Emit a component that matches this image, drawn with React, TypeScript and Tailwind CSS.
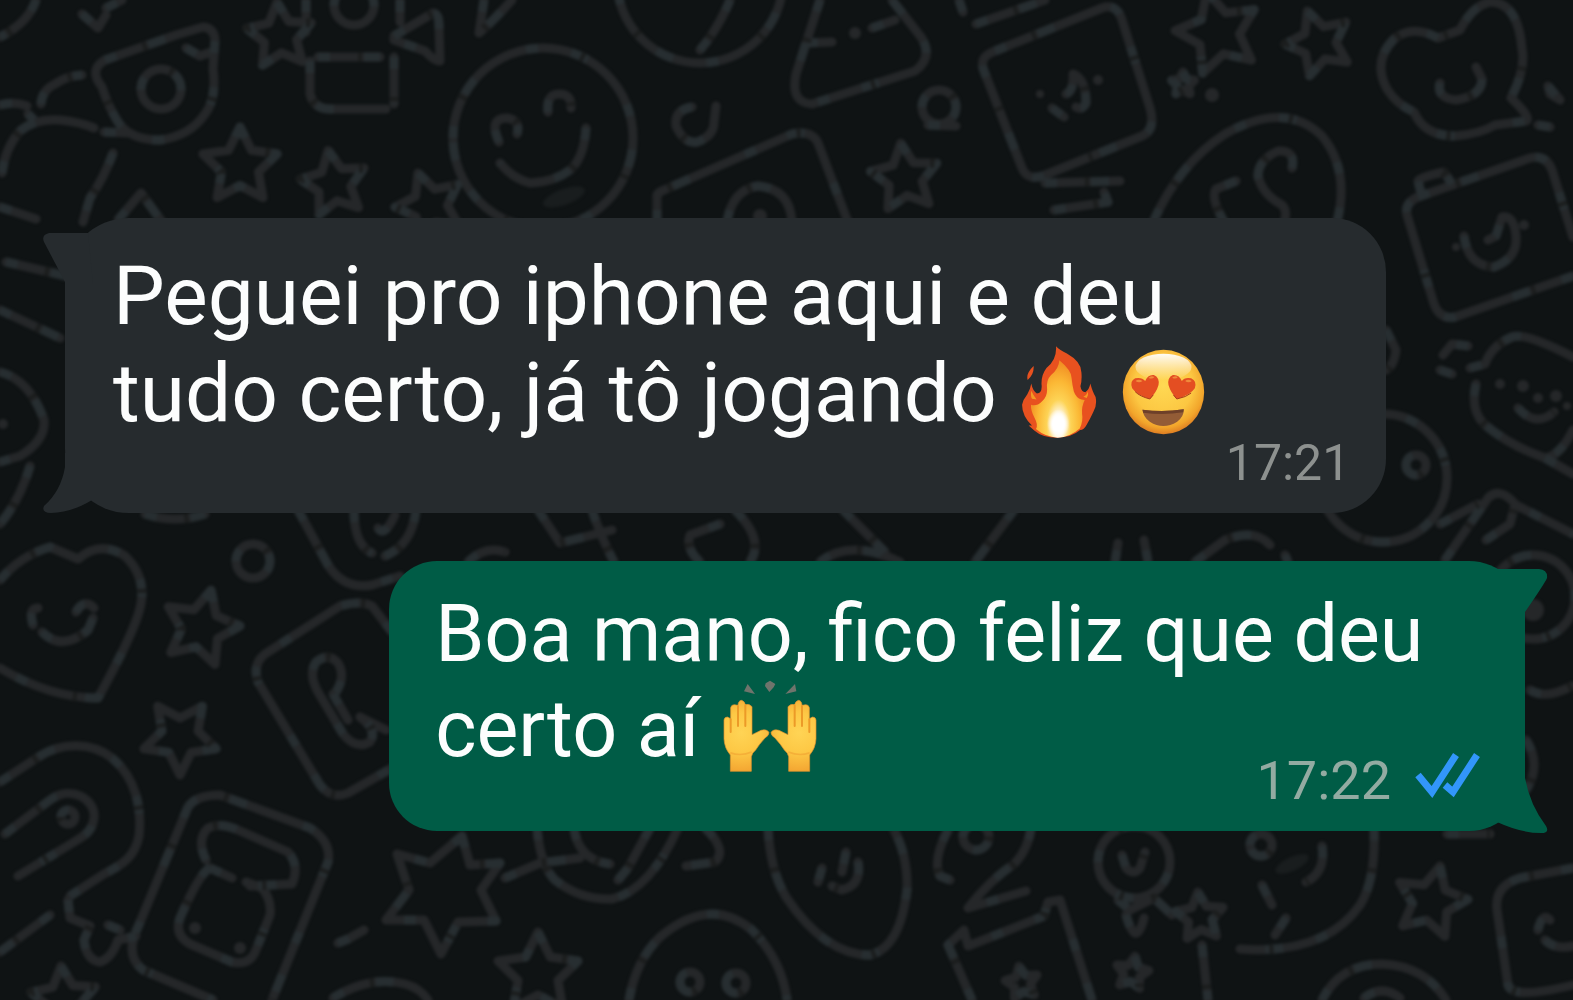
import type { ReactNode } from 'react';
import { clsx } from 'clsx';


// [cx, cy, radius, rotation]
const STARS = [
    [280, 36, 34, -5],
    [240, 166, 39, 0],
    [334, 184, 34, -10],
    [430, 206, 35, -20],
    [905, 178, 35, -7],
    [1218, 33, 43, -15],
    [1319, 43, 34, -20],
    [1183, 84, 12, 0],
    [201, 628, 39, 15],
    [180, 737, 38, 36],
    [64, 1000, 34, -5],
    [538, 974, 42, 0],
    [1200, 917, 25, -5],
    [1431, 902, 37, 14],
    [1022, 983, 17, -10],
    [1132, 973, 17, 10],
];

// [cx, cy, radius]
const RINGS = [
    [161, 89, 20],
    [354, 5, 20],
    [543, 138, 90],
    [700, -20, 83],
    [939, 107, 17],
    [253, 561, 17],
    [68, 817, 7],
    [1383, 478, 64],
    [1416, 465, 10],
    [1533, 597, 42],
    [690, 982, 10],
    [736, 983, 10],
    [976, 837, 13],
    [1134, 862, 36],
    [1261, 845, 11],
];

// [cx, cy, radius]
const DOTS = [
    [1098, 80, 5], [1040, 94, 4], [1212, 95, 7], [1456, 247, 4], [1524, 225, 5],
    [1500, 384, 5], [1523, 386, 6], [1538, 398, 5], [1556, 396, 6], [1567, 406, 4],
    [760, 216, 7], [3, 424, 5], [855, 33, 6], [1533, 610, 11], [195, 928, 6], [240, 948, 6],
];

const DOODLES = [
    // upper left
    'M36 0C30 18 14 30 0 37M82 14L98 28L106 15M106 8L122 0',
    'M105 60L176 35L203 27Q214 28 215 40L213 69Q217 98 205 114Q190 136 160 140Q130 140 118 122Q108 106 102 87Q88 70 105 60ZM186 48L200 56L211 52',
    'M41 104Q42 90 55 84Q66 76 82 75M0 105Q14 101 27 106M28 114L34 120',
    'M2 173Q5 148 20 131Q36 118 60 120Q80 122 94 128M104 132L128 133M113 153Q104 178 90 198L83 222M0 207L36 219M118 220L141 193L162 222',
    'M306 0V32M400 0V22M318 57H380M394 57V104M310 61V94Q314 109 330 109H386',
    'M394 36L433 13Q439 14 439 25L440 61Q434 61 425 51L394 40ZM484 0L479 33Q492 22 512 0',
    // laughing face
    'M499 142Q488 118 507 118Q521 120 517 134M548 112Q546 94 559 94Q572 94 571 108M586 128Q584 158 570 170Q554 182 530 183Q512 178 500 163',
    // top middle
    'M730 0Q722 20 708 40L700 50M692 107Q674 110 676 126Q684 144 697 142Q714 136 714 122L716 106',
    'M820 0L796 74Q790 103 812 104L915 71Q934 57 921 37L892 0M806 43L832 42M872 28L895 20M928 125L956 126M959 0L963 12M976 24L1045 0',
    'M657 222V197Q656 193 664 190L792 134Q812 130 818 143L848 222M727 222Q732 190 758 186Q790 189 792 222',
    'M995 51L1102 8Q1117 3 1122 20L1150 108Q1156 130 1142 136L1045 175Q1028 182 1022 168L984 71Q978 57 995 51Z',
    'M1066 94Q1074 91 1073 74Q1086 79 1086 103Q1082 111 1076 107M1052 108L1064 117M1045 183L1120 181M1054 210L1108 202L1104 192',
    // upper right
    'M1154 220Q1180 163 1225 134Q1285 100 1322 136Q1350 170 1337 222M1292 168Q1296 150 1278 151Q1258 160 1258 176Q1262 194 1282 205Q1288 211 1284 222M1236 181L1216 189Q1210 197 1224 222',
    'M1438 38Q1412 24 1394 39Q1372 61 1387 89Q1396 104 1414 112Q1424 136 1455 136Q1480 134 1495 125L1526 121Q1532 118 1511 98Q1526 69 1522 49Q1518 2 1490 2Q1472 6 1460 30ZM1440 83Q1436 98 1456 100Q1482 96 1482 79L1476 67',
    'M1548 86L1560 100L1550 94ZM1538 125L1550 127',
    'M1418 197L1530 158Q1546 154 1552 170L1573 237M1573 276L1455 317Q1440 320 1434 304L1407 215Q1404 203 1418 197M1421 193L1418 181Q1420 177 1444 172L1452 184',
    'M1464 236Q1468 266 1494 267Q1518 258 1516 236Q1514 215 1502 217L1496 236L1488 240',
    'M1386 330L1396 350Q1394 366 1386 370M1468 346L1452 344L1443 355M1440 370L1452 374',
    'M1470 368L1485 364Q1492 345 1512 337Q1524 332 1573 357M1476 384Q1470 410 1484 424Q1510 446 1545 458Q1560 456 1573 430M1545 458L1573 474M1518 408Q1536 428 1554 412',
    'M1445 560L1488 498Q1500 486 1516 505L1573 534M1440 524L1478 504M1486 540L1510 524L1514 508M1530 690Q1545 700 1572 686M1526 740Q1542 765 1526 790',
    // left edge
    'M6 262L66 276M0 310L60 338M0 372Q30 380 44 420Q46 440 20 456L0 462M30 466Q20 500 0 524M145 514Q175 524 205 514',
    'M0 580Q20 556 50 547L78 559Q100 540 125 556Q150 580 138 615Q130 640 98 698Q50 698 0 668M33 625Q28 608 38 608M42 632Q62 652 88 630L93 618M76 612Q84 598 94 608',
    'M298 510L328 565Q344 590 372 585L400 576M392 632L372 606Q360 600 340 606L265 654Q252 664 258 682L320 785Q332 800 348 793L392 768',
    'M336 692Q346 676 338 663Q328 652 316 662Q308 674 318 692L343 734Q356 750 370 742Q378 730 360 717L386 730M333 694L348 720',
    'M0 782L40 756C62 742 92 742 112 758C136 778 142 808 139 836C135 856 124 864 104 874L70 896M50 915L0 952M5 834L50 800C72 784 96 800 94 818C92 832 84 836 74 842L18 876',
    'M68 900L70 918L90 926L84 940Q86 960 100 962Q112 958 118 940L136 936M108 925L120 930',
    'M188 807Q196 795 220 795L310 828Q332 842 328 862L272 1000M188 807L138 927Q124 955 143 970L213 1000',
    'M206 860Q196 840 208 828Q220 822 238 830L288 852Q300 865 292 884L250 886M210 868Q200 872 180 918Q174 935 190 944L232 962Q250 966 256 950L270 915Q272 900 262 888L246 882M210 868L232 878',
    'M338 943L348 939L364 930M333 998Q370 975 405 984Q420 988 428 1000',
    // strip between the bubbles
    'M354 510Q354 545 372 553M416 510Q412 545 385 556M378 528Q384 538 395 515M538 510L560 543L612 530M592 510Q600 535 614 562M468 562Q485 545 505 552',
    'M735 510Q765 540 750 562M720 524L690 535Q685 548 700 562M843 510L885 552M820 562Q850 538 900 562M1014 510L975 562M1115 562L1118 543M1148 562L1144 540M1195 562L1225 540Q1255 528 1270 545M1285 555L1288 562',
    // bottom
    'M462 836L470 865L500 863L481 890L496 921L458 922L441 954L424 920L386 920L409 890L397 854L430 863Z',
    'M537 828Q540 865 555 880Q580 900 612 899Q650 890 678 828M574 828Q578 860 610 864M650 828L628 868L618 880M505 878L540 863L580 858M705 828Q728 850 715 862L686 866',
    'M768 828Q770 870 786 897Q825 955 870 955Q900 948 907 890Q908 855 893 828M822 868L818 882M846 852L842 872M858 862Q862 885 842 890L832 886',
    'M629 1000Q636 960 660 937Q710 895 752 930Q782 960 787 1000M948 830Q932 860 940 876L950 880',
    'M1031 828Q1028 850 1014 864Q990 880 968 908L1026 891M972 1000L948 945L964 930L968 946L1044 916L1048 902L1060 900L1092 1000',
    'M1122 855L1126 868Q1134 876 1140 868L1145 852M1118 900L1130 910L1154 898L1172 915M1126 915Q1136 950 1144 918M1202 945L1208 1000',
    'M1374 828Q1376 880 1360 905Q1325 955 1240 949M1322 846Q1326 872 1306 882M1262 885L1272 905M1286 918L1275 935',
    'M1322 1000Q1340 964 1382 964Q1425 966 1446 1000M1364 998Q1382 984 1400 998M1447 834H1490M1573 868L1520 878Q1494 886 1497 910L1508 985Q1512 1000 1573 985M1538 930Q1542 912 1550 920M1545 940Q1555 950 1573 946',
];

function starPath(cx: number, cy: number, r: number, rotation: number) {
    const points = Array.from({ length: 10 }, (_, i) => {
        const angle = ((i * 36 + rotation - 90) * Math.PI) / 180;
        const length = i % 2 ? r * 0.5 : r;
        return `${(cx + Math.cos(angle) * length).toFixed(1)} ${(cy + Math.sin(angle) * length).toFixed(1)}`;
    });
    return `M${points.join('L')}Z`;
}

const WALLPAPER = [
    ...DOODLES,
    ...STARS.map(([cx, cy, r, rotation]) => starPath(cx, cy, r, rotation)),
    ...RINGS.map(([cx, cy, r]) => `M${cx - r} ${cy}a${r} ${r} 0 1 1 ${r * 2} 0a${r} ${r} 0 1 1 ${-r * 2} 0`),
].join('');

function Wallpaper() {
    return (
        <svg
            className="absolute inset-0 -z-10 h-full w-full"
            viewBox="0 0 1573 1000"
            preserveAspectRatio="xMidYMid slice"
            fill="none"
            strokeLinejoin="round"
            strokeLinecap="round"
            aria-hidden="true"
        >
            <filter id="soft" x="0" y="0" width="100%" height="100%" colorInterpolationFilters="sRGB">
                <feGaussianBlur stdDeviation="1.5" />
            </filter>
            <g filter="url(#soft)">
                <path d={WALLPAPER} stroke="#252729" strokeWidth="9" />
                <path d={WALLPAPER} stroke="#272e31" strokeWidth="9" strokeLinecap="butt" strokeDasharray="12 34 18 60" />
                <path d={WALLPAPER} stroke="#1b1d1d" strokeWidth="9" strokeLinecap="butt" strokeDasharray="0 40 4 96" />
                {DOTS.map(([cx, cy, r]) => (
                    <circle key={`${cx}-${cy}`} cx={cx} cy={cy} r={r} fill="#252729" />
                ))}
                <ellipse cx="564" cy="197" rx="22" ry="8" fill="#191d1e" transform="rotate(-20 564 197)" />
                <ellipse cx="1292" cy="864" rx="18" ry="7" fill="#191d1e" transform="rotate(-25 1292 864)" />
            </g>
        </svg>
    )
}

function FireEmoji() {
    return (
        <svg className="inline-block -mt-3 ml-1 h-[92px] w-[76px] align-[-17px]" viewBox="124 50 228 279" role="img" aria-label="🔥">
            <defs>
                <radialGradient id="flame" gradientUnits="userSpaceOnUse" cx="237" cy="290" r="150" gradientTransform="translate(237 290) scale(.62 1.3) translate(-237 -290)">
                    <stop offset="0" stopColor="#fff" />
                    <stop offset=".18" stopColor="#fff8e4" />
                    <stop offset=".4" stopColor="#fdd355" />
                    <stop offset=".68" stopColor="#fbb835" />
                    <stop offset="1" stopColor="#f08b22" />
                </radialGradient>
                <radialGradient id="core">
                    <stop offset=".5" stopColor="#fff" />
                    <stop offset="1" stopColor="#fff" stopOpacity="0" />
                </radialGradient>
            </defs>
            <path
                fill="#e8511f"
                d="M229 51Q240 63 262 73Q306 98 306 130Q308 155 303 172Q306 190 318 190Q330 182 333 164Q340 190 349 205Q354 232 342 250Q332 272 321 290Q314 304 302 305Q276 328 232 328Q188 328 163 306L146 291L156 291Q126 262 126 228Q129 212 142 196Q151 182 154 164Q158 186 171 194Q188 192 185 166Q184 138 200 117Q232 92 229 51ZM161 111Q163 136 143 153Q137 134 161 111Z"
            />
            <path
                fill="url(#flame)"
                d="M239 93Q276 124 276 146Q278 166 283 188Q290 208 306 212L316 214Q306 234 308 256Q312 276 301 300Q270 327 234 328Q196 326 168 302Q176 290 164 268Q152 246 153 228Q170 234 186 218Q202 206 202 182Q198 154 214 138Q238 118 239 93Z"
            />
            <path fill="#f39a25" d="M154 186Q151 202 156 210L170 212Q160 200 154 186ZM326 188Q328 198 322 208L312 204Q322 200 326 188Z" />
            <ellipse cx="236" cy="286" rx="34" ry="44" fill="url(#core)" />
        </svg>
    )
}

function HeartEyesEmoji() {
    return (
        <svg className="inline-block -mt-3 ml-1 h-[86px] w-[83px] align-[-14px]" viewBox="423 58 248 258" role="img" aria-label="😍">
            <defs>
                <radialGradient id="face" cx=".5" cy=".42" r=".58">
                    <stop offset="0" stopColor="#ffd953" />
                    <stop offset=".62" stopColor="#fcc742" />
                    <stop offset=".86" stopColor="#f2a52b" />
                    <stop offset="1" stopColor="#dd7c22" />
                </radialGradient>
                <linearGradient id="shine" x1="0" y1="0" x2="0" y2="1">
                    <stop offset="0" stopColor="#fff" stopOpacity=".95" />
                    <stop offset="1" stopColor="#fff" stopOpacity="0" />
                </linearGradient>
            </defs>
            <ellipse cx="547" cy="187" rx="122" ry="127" fill="url(#face)" />
            <ellipse cx="547" cy="112" rx="84" ry="40" fill="url(#shine)" />
            <path
                fill="#e44e22"
                d="M506 208Q466 196 453 176Q445 154 462 146Q482 142 492 154Q500 134 518 136Q536 144 532 166Q526 188 506 208ZM587 208Q568 188 562 166Q558 144 575 136Q594 134 602 154Q610 142 630 146Q648 154 641 176Q628 196 587 208Z"
            />
            <path fill="none" stroke="#a63a1c" strokeWidth="3" d="M462 186Q476 200 506 208L516 196M577 196L587 208Q616 202 630 190" />
            <path fill="#f08a3c" d="M463 154Q472 146 484 154Q474 162 463 154ZM502 144Q510 136 520 142Q512 150 502 144ZM573 144Q580 136 590 142Q584 150 573 144ZM612 154Q620 146 632 154Q622 162 612 154Z" />
            <path fill="#935c36" d="M484 240Q545 248 608 239Q608 262 588 276Q546 302 506 276Q486 262 484 240Z" />
            <path fill="#6e4029" d="M484 240Q545 248 608 239L606 248Q545 258 486 249Z" />
        </svg>
    )
}

const HAND = 'M96 306V257Q78 236 77 208V152Q78 143 87 143Q96 145 97 152V115Q99 106 108 106L119 108Q120 94 129 93Q139 95 141 106Q152 102 161 112V196L188 183Q206 178 212 190Q212 198 200 206Q182 226 172 242Q160 252 159 262V306Z';

function RaisedHandsEmoji() {
    return (
        <svg className="inline-block -mt-3 ml-1 h-[92px] w-[94px] align-[-16px]" viewBox="74 32 282 276" role="img" aria-label="🙌">
            <defs>
                <radialGradient id="palm" gradientUnits="userSpaceOnUse" cx="128" cy="190" r="120">
                    <stop offset="0" stopColor="#ffd455" />
                    <stop offset=".5" stopColor="#fdc845" />
                    <stop offset="1" stopColor="#f3a431" />
                </radialGradient>
                <g id="hand">
                    <path d={HAND} fill="url(#palm)" stroke="#e0902c" strokeWidth="2" />
                    <path
                        d="M97 150V188M119 110V170M141 108V170"
                        fill="none"
                        stroke="#ec9a28"
                        strokeWidth="6"
                        strokeLinecap="round"
                    />
                    <path d="M96 250Q126 262 160 248" fill="none" stroke="#f0a132" strokeWidth="5" opacity=".6" />
                </g>
            </defs>
            <use href="#hand" />
            <use href="#hand" transform="translate(430 0) scale(-1 1)" />
            <path fill="#6f746c" d="M148 44L170 74L137 66ZM215 34L231 44L226 54L213 68L200 50L202 42ZM290 44L294 66L261 74Z" />
        </svg>
    )
}

function ReadTicks() {
    return (
        <svg
            className="h-[46px] w-[66px]"
            viewBox="0 0 66 46"
            fill="none"
            stroke="#3296fa"
            strokeWidth="7"
            role="img"
            aria-label="Lida"
        >
            <path d="M3 22L17 39L41 2M30 32L38 39L62 2" />
        </svg>
    )
}

type BubbleProps = {
    time: string,
    sent?: boolean,
    children: ReactNode
}
function Bubble(props: BubbleProps) {
    const { time, sent, children } = props;

    return (
        <article
            className={clsx(
                "relative flex flex-col pb-[29px]",
                sent
                    ? "self-end w-[77.8%] pt-[26px] pl-[46px] pr-11 rounded-l-[48px] rounded-r-[56px] bg-[#005c46]"
                    : "w-[90.5%] pt-[30px] pl-12 pr-9 rounded-l-[64px] rounded-r-[54px] bg-[#262b2e]"
            )}
        >
            <BubbleTails sent={sent} />
            <p
                className={clsx(
                    "relative text-[#fcfdfd]",
                    sent ? "text-[79px] leading-[95px]" : "pr-16 text-[82px] leading-[97px]"
                )}
            >
                {children}
            </p>
            <div
                className={clsx(
                    "relative flex items-baseline self-end gap-6 leading-[42px]",
                    sent ? "-mt-6 text-[54px] text-[#93aba2]" : "text-[50px] text-[#8d918f]"
                )}
            >
                <time>{time}</time>
                {sent && <ReadTicks />}
            </div>
        </article>
    )
}

function BubbleTails({ sent }: { sent?: boolean }) {
    if (sent) {
        return (
            <div className="absolute inset-y-0 -right-6 flex flex-col justify-between" aria-hidden="true">
                <svg className="w-[60px] h-[60px]" viewBox="0 0 60 60" fill="#005c46">
                    <path d="M8 8H50Q59 9 58 17Q56 22 36 51V60H8Z" />
                </svg>
                <svg className="w-[60px] h-[60px] overflow-visible" viewBox="0 0 60 60" fill="#005c46">
                    <path d="M8 0H36V7Q41 34 57 55Q61 62 52 62Q32 62 8 51Z" />
                </svg>
            </div>
        )
    }

    return (
        <div className="absolute inset-y-0 -left-[22px] flex flex-col justify-between" aria-hidden="true">
            <svg className="w-[60px] h-[66px]" viewBox="0 0 60 66" fill="#262b2e">
                <path d="M45 15H6Q-2 17 1 24L22 64V66H50Z" />
            </svg>
            <svg className="w-[60px] h-[60px]" viewBox="0 0 60 60" fill="#262b2e">
                <path d="M22 0V14Q18 38 1 53Q-2 60 8 60Q30 59 49 47V0Z" />
            </svg>
        </div>
    )
}

export default function App() {
    return (
        <main className="relative isolate overflow-hidden min-h-screen flex flex-col gap-12 pt-[218px] pl-[65px] pr-12 pb-12 bg-[#0f1314] font-['Roboto','Liberation_Sans',sans-serif]">
            <Wallpaper />
            <Bubble time="17:21">
                Peguei pro iphone aqui e deu tudo certo, já tô jogando <FireEmoji /> <HeartEyesEmoji />
            </Bubble>
            <Bubble time="17:22" sent>
                Boa mano, fico feliz que deu certo aí <RaisedHandsEmoji />
            </Bubble>
        </main>
    )
}
